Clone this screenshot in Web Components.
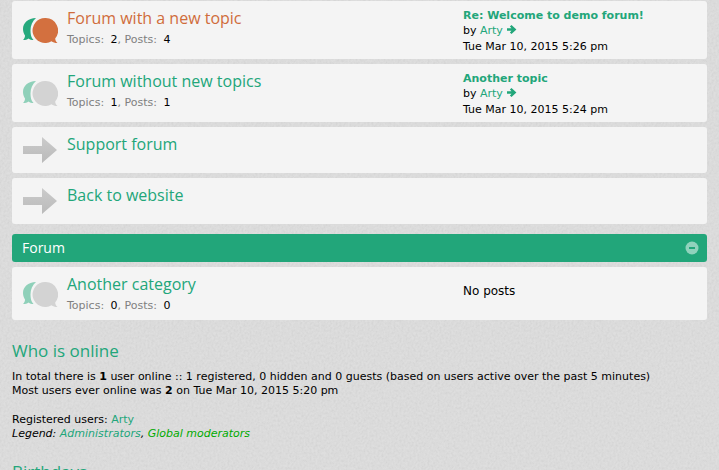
<!DOCTYPE html>
<html lang="en">
<head>
<meta charset="utf-8">
<meta name="viewport" content="width=device-width, initial-scale=1">
<title>Demo forum</title>
<style>
  :root {
    --green: #22a67a;
    --orange: #d06c3b;
    --row: #f4f4f4;
    --heading: "Open Sans", "Noto Sans", sans-serif;
  }
  html {
    overflow: hidden;
  }
  body {
    margin: 0;
    padding: 1px 12px 0;
    color: #000;
    font: 11px/15px Verdana, "DejaVu Sans", sans-serif;
    background: #dedede url("data:image/svg+xml,%3Csvg xmlns='http://www.w3.org/2000/svg' width='200' height='200'%3E%3Cfilter id='n' x='0' y='0' width='100%25' height='100%25'%3E%3CfeTurbulence type='fractalNoise' baseFrequency='.5 .4' numOctaves='2' stitchTiles='stitch'/%3E%3CfeColorMatrix values='0 0 0 0 0 0 0 0 0 0 0 0 0 0 0 .08 0 0 0 -.025'/%3E%3C/filter%3E%3Crect width='200' height='200' filter='url(%23n)'/%3E%3C/svg%3E");
  }
  a {
    color: var(--link, var(--green));
    text-decoration: none;
  }
  p {
    margin: 0 0 15px;
  }
</style>
</head>
<body>
<main>
  <forum-list>
    <forum-row icon="unread">
      <a slot="title" href="#new">Forum with a new topic</a>
      <topic-count slot="stats" topics="2" posts="4"></topic-count>
      <last-post slot="last" author="Arty" date="Tue Mar 10, 2015 5:26 pm">Re: Welcome to demo forum!</last-post>
    </forum-row>
    <forum-row icon="read">
      <a slot="title" href="#read">Forum without new topics</a>
      <topic-count slot="stats" topics="1" posts="1"></topic-count>
      <last-post slot="last" author="Arty" date="Tue Mar 10, 2015 5:24 pm">Another topic</last-post>
    </forum-row>
    <forum-row icon="link">
      <a slot="title" href="#support">Support forum</a>
    </forum-row>
    <forum-row icon="link">
      <a slot="title" href="#website">Back to website</a>
    </forum-row>
  </forum-list>
  <forum-list heading="Forum">
    <forum-row icon="read">
      <a slot="title" href="#category">Another category</a>
      <topic-count slot="stats" topics="0" posts="0"></topic-count>
      <no-posts slot="last">No posts</no-posts>
    </forum-row>
  </forum-list>
  <board-stats heading="Who is online">
    <p>In total there is <strong>1</strong> user online :: 1 registered, 0 hidden and 0 guests (based on users active over the past 5 minutes)<br>
      Most users ever online was <strong>2</strong> on Tue Mar 10, 2015 5:20 pm</p>
    <p>Registered users: <a href="#arty">Arty</a><br>
      <em>Legend: <a href="#admins">Administrators</a>, <a href="#mods" style="color: #0a0">Global moderators</a></em></p>
  </board-stats>
  <board-stats heading="Birthdays"></board-stats>
</main>

<script>
const bubbles = (front, back) => `
  <svg width="36" height="28" viewBox="0 0 36 28" aria-hidden="true">
    <path fill="${back}" d="M14 2C6 2 1 7 1 13c0 3 1 5 2 6.500C3 21 2.500 22.500 1 24c2.500 0 4-.5 5.500-1.500 1.500 1 3 1.500 5 1.500C9 21.500 8.500 18 8.500 14.500 8.500 9.500 10.500 5 14 2z"/>
    <path fill="${front}" d="M23 2a12.500 12.500 0 1 0 6.500 23.200c1.500 1 3.300 1.800 6 1.800-1.500-1.300-2.200-2.800-2.300-4.600A12.500 12.500 0 0 0 23 2z"/>
  </svg>`;

const icons = {
  unread: bubbles('#d3703f', '#26a97d'),
  read: bubbles('#d3d3d3', '#8fd0b9'),
  link: `
  <svg width="36" height="28" viewBox="0 0 36 28" aria-hidden="true">
    <defs>
      <linearGradient id="g" x2="0" y2="1"><stop stop-color="#cbcbcb"/><stop offset="1" stop-color="#bababa"/></linearGradient>
    </defs>
    <path fill="url(#g)" d="M1 10h19V1l15 13-15 13v-9H1z"/>
  </svg>`
};

class ForumList extends HTMLElement {
  constructor() {
    super();
    this.attachShadow({ mode: 'open' });
  }

  connectedCallback() {
    const heading = this.getAttribute('heading');
    this.shadowRoot.innerHTML = `
      <style>
        :host {
          display: block;
          margin-bottom: 10px;
        }
        header {
          display: flex;
          align-items: center;
          justify-content: space-between;
          padding: 0 8px 0 10px;
          margin-bottom: 5px;
          border-radius: 3px;
          background: var(--green);
        }
        h2 {
          margin: 0;
          color: #fff;
          font: 14px/28px var(--heading);
        }
        button {
          display: flex;
          padding: 0;
          border: 0;
          background: none;
          cursor: pointer;
        }
        .rows {
          display: flex;
          flex-direction: column;
          gap: 5px;
        }
        .rows[hidden] {
          display: none;
        }
      </style>
      ${heading ? `
      <header>
        <h2>${heading}</h2>
        <button type="button" aria-label="Toggle ${heading}" aria-expanded="true">
          <svg width="14" height="14" viewBox="0 0 14 14" aria-hidden="true">
            <circle cx="7" cy="7" r="6.500" fill="#90d2bc"/>
            <path fill="#22a67a" d="M4 6h6v2H4z"/>
          </svg>
        </button>
      </header>` : ''}
      <div class="rows"><slot></slot></div>
    `;
    const button = this.shadowRoot.querySelector('button');
    if (button) {
      button.addEventListener('click', this._toggle.bind(this));
    }
  }

  _toggle(event) {
    const rows = this.shadowRoot.querySelector('.rows');
    rows.hidden = !rows.hidden;
    event.currentTarget.setAttribute('aria-expanded', String(!rows.hidden));
  }
}

class ForumRow extends HTMLElement {
  constructor() {
    super();
    this.attachShadow({ mode: 'open' });
  }

  connectedCallback() {
    this.shadowRoot.innerHTML = `
      <style>
        :host {
          display: grid;
          grid-template-columns: 45px minmax(0, 1fr) 244px;
          padding: 7px 0 5px 10px;
          border-radius: 3px;
          background: var(--row);
        }
        .icon {
          align-self: center;
          padding: 2px 0 4px;
        }
        svg {
          display: block;
        }
        h3 {
          margin: 0;
          font: 16px/20px var(--heading);
        }
        /* unread rows recolour their title link */
        :host([icon="unread"]) h3 {
          --link: var(--orange);
        }
      </style>
      <div class="icon">${icons[this.getAttribute('icon')]}</div>
      <div>
        <h3><slot name="title"></slot></h3>
        <slot name="stats"></slot>
      </div>
      <slot name="last"></slot>
    `;
  }
}

class TopicCount extends HTMLElement {
  constructor() {
    super();
    this.attachShadow({ mode: 'open' });
  }

  connectedCallback() {
    this.shadowRoot.innerHTML = `
      <style>
        :host {
          display: block;
          padding: 4px 0 2px;
          color: #808080;
        }
        span {
          margin-left: 3px;
          color: #000;
        }
      </style>
      Topics: <span>${this.getAttribute('topics')}</span>, Posts: <span>${this.getAttribute('posts')}</span>
    `;
  }
}

class LastPost extends HTMLElement {
  constructor() {
    super();
    this.attachShadow({ mode: 'open' });
  }

  connectedCallback() {
    this.shadowRoot.innerHTML = `
      <style>
        :host {
          display: block;
        }
        a {
          color: var(--green);
          text-decoration: none;
        }
        .topic {
          display: block;
          font-weight: bold;
        }
        .latest {
          margin-left: 1px;
        }
        time {
          display: block;
          margin-top: 1px;
        }
      </style>
      <a class="topic" href="#topic"><slot></slot></a>
      by <a href="#user">${this.getAttribute('author')}</a>
      <a class="latest" href="#last" aria-label="View the latest post"><svg width="10" height="9" viewBox="0 0 10 9" aria-hidden="true"><path fill="#22a67a" d="M0 3.300h4.500L2.900 1.600 4.500 0 9.400 4.500 4.500 9 2.900 7.400l1.600-1.700H0z"/></svg></a>
      <time>${this.getAttribute('date')}</time>
    `;
  }
}

class NoPosts extends HTMLElement {
  constructor() {
    super();
    this.attachShadow({ mode: 'open' });
    this.shadowRoot.innerHTML = `
      <style>
        :host {
          display: block;
          padding-top: 10px;
          font-size: 12px;
        }
      </style>
      <slot></slot>
    `;
  }
}

class BoardStats extends HTMLElement {
  constructor() {
    super();
    this.attachShadow({ mode: 'open' });
  }

  connectedCallback() {
    this.shadowRoot.innerHTML = `
      <style>
        :host {
          display: block;
          margin-top: 19px;
          line-height: 14px;
        }
        h3 {
          margin: 0 0 7px;
          color: var(--green);
          font: 17px/24px var(--heading);
        }
      </style>
      <h3>${this.getAttribute('heading')}</h3>
      <slot></slot>
    `;
  }
}

customElements.define('forum-list', ForumList);
customElements.define('forum-row', ForumRow);
customElements.define('topic-count', TopicCount);
customElements.define('last-post', LastPost);
customElements.define('no-posts', NoPosts);
customElements.define('board-stats', BoardStats);
</script>
</body>
</html>
